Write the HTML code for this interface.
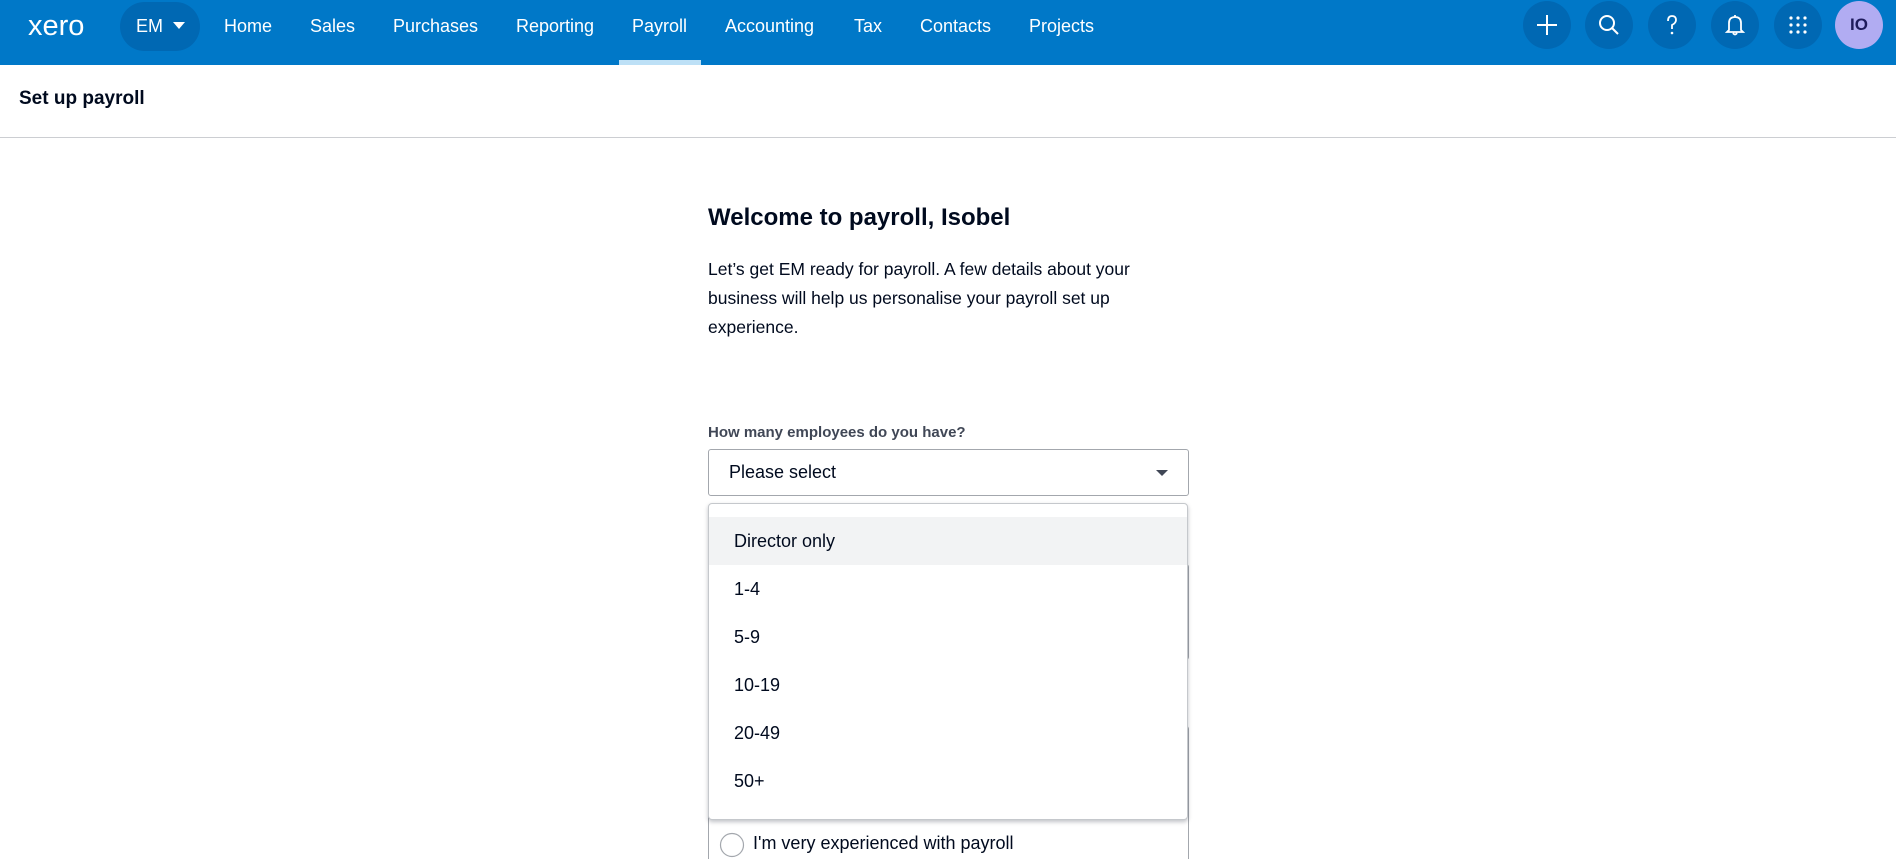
<!DOCTYPE html>
<html><head><meta charset="utf-8"><style>
*{box-sizing:border-box;margin:0;padding:0}
html,body{width:1896px;height:859px;overflow:hidden}
body{background:#fff;font-family:"Liberation Sans",Arial,sans-serif;color:#000a1e;position:relative}
.nav{position:absolute;left:0;top:0;width:1896px;height:65px;background:#0078c8}
.nav .t{position:absolute;top:14px;color:#fff;font-size:18px;line-height:24px}
.logo{position:absolute;left:28px;top:10px;color:#fff;font-size:29px;font-weight:normal}
.em{position:absolute;left:120px;top:2px;width:80px;height:49px;border-radius:25px;background:#0068b3}
.ul{position:absolute;left:619px;top:60px;width:82px;height:5px;background:#bde0f6}
.ic{position:absolute;top:1px;width:48px;height:48px;border-radius:50%;background:#0068b3}
.ic svg{position:absolute;left:12px;top:12px}
.hdr{position:absolute;left:0;top:65px;width:1896px;height:73px;border-bottom:1px solid #ccced2}
.hdr b{position:absolute;left:19px;top:23px;font-size:19px}
.col{position:absolute;left:708px;width:481px}
.box{position:absolute;left:708px;width:481px;border:1px solid #a3a7ad;border-radius:3px;background:#fff}
.opt{position:absolute;left:0;width:100%;height:48px;font-size:18px;line-height:48px;padding-left:25px}
</style></head><body>
<div class="nav">
<div class="logo">xero</div>
<div class="em"></div>
<div class="t" style="left:136px">EM</div>
<svg style="position:absolute;left:173px;top:22px" width="12" height="8"><path d="M0 0H12L6 7Z" fill="#fff"/></svg>
<div class="t" style="left:224px">Home</div>
<div class="t" style="left:310px">Sales</div>
<div class="t" style="left:393px">Purchases</div>
<div class="t" style="left:516px">Reporting</div>
<div class="t" style="left:632px">Payroll</div>
<div class="t" style="left:725px">Accounting</div>
<div class="t" style="left:854px">Tax</div>
<div class="t" style="left:920px">Contacts</div>
<div class="t" style="left:1029px">Projects</div>
<div class="ul"></div>
<div class="ic" style="left:1523px"><svg width="24" height="24"><path d="M12 2V22M2 12H22" stroke="#fff" stroke-width="2"/></svg></div>
<div class="ic" style="left:1585px"><svg width="24" height="24"><circle cx="10" cy="10" r="7" stroke="#fff" stroke-width="2" fill="none"/><path d="M15 15L21 21" stroke="#fff" stroke-width="2"/></svg></div>
<div class="ic" style="left:1648px"><svg width="24" height="24"><path d="M8 8Q8 3 12 3Q16 3 16 7Q16 10 12 12V16" stroke="#fff" stroke-width="1.8" fill="none"/><circle cx="12" cy="20" r="1.3" fill="#fff"/></svg></div>
<div class="ic" style="left:1711px"><svg width="24" height="24"><path d="M12 2V4M6 17V10Q6 4 12 4Q18 4 18 10V17L20 19H4Z M10 20Q12 23 14 20" stroke="#fff" stroke-width="1.8" fill="none"/></svg></div>
<div class="ic" style="left:1774px"><svg width="24" height="24" fill="#fff"><circle cx="5" cy="5" r="1.6"/><circle cx="12" cy="5" r="1.6"/><circle cx="19" cy="5" r="1.6"/><circle cx="5" cy="12" r="1.6"/><circle cx="12" cy="12" r="1.6"/><circle cx="19" cy="12" r="1.6"/><circle cx="5" cy="19" r="1.6"/><circle cx="12" cy="19" r="1.6"/><circle cx="19" cy="19" r="1.6"/></svg></div>
<div class="ic" style="left:1835px;background:#b1acf2;color:#1e1b5c;font-weight:bold;font-size:17px;line-height:48px;text-align:center">IO</div>
</div>
<div class="hdr"><b>Set up payroll</b></div>
<div class="col" style="top:204px;font-size:24px;font-weight:bold">Welcome to payroll, Isobel</div>
<div class="col" style="top:255px;font-size:17.5px;line-height:29px">Let’s get EM ready for payroll. A few details about your business will help us personalise your payroll set up experience.</div>
<div class="col" style="top:424px;font-size:15px;font-weight:bold;color:#404756">How many employees do you have?</div>
<div class="box" style="top:449px;height:47px"><span style="position:absolute;left:20px;top:12px;font-size:18px">Please select</span>
<svg style="position:absolute;left:447px;top:20px" width="12" height="7"><path d="M0 0H12L6 6Z" fill="#404756"/></svg></div>
<div class="box" style="top:564px;height:96px"></div>
<div class="box" style="top:726px;height:133px;border-bottom:none;border-radius:3px 3px 0 0"></div>
<svg style="position:absolute;left:719px;top:832px" width="26" height="26"><circle cx="13" cy="13" r="11.5" stroke="#a3a7ad" stroke-width="1.2" fill="#fff"/></svg>
<div style="position:absolute;left:753px;top:832px;font-size:18px;line-height:22px">I'm very experienced with payroll</div>
<div style="position:absolute;left:708px;top:503px;width:480px;height:317px;background:#fff;border:1px solid #c5c8cc;border-radius:4px;box-shadow:0 2px 4px rgba(0,10,30,.25)">
<div class="opt" style="top:13px;background:#f2f3f4">Director only</div>
<div class="opt" style="top:61px">1-4</div>
<div class="opt" style="top:109px">5-9</div>
<div class="opt" style="top:157px">10-19</div>
<div class="opt" style="top:205px">20-49</div>
<div class="opt" style="top:253px">50+</div>
</div>
</body></html>
